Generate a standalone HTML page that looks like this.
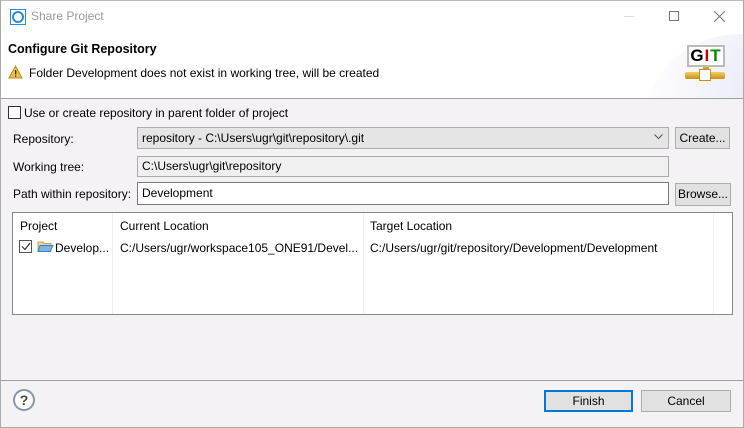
<!DOCTYPE html>
<html><head><style>
*{box-sizing:border-box;margin:0;padding:0}
body{width:744px;height:428px;overflow:hidden;font-family:"Liberation Sans",sans-serif;font-size:12px;color:#000;background:#f5f2f5;position:relative}
.a{position:absolute}
.win{left:0;top:0;width:744px;height:428px;border:1px solid #aaa;border-top:1px solid #bbb}
.btn{position:absolute;background:#e1e1e1;border:1px solid #adadad;text-align:center;line-height:20px}
.fld{position:absolute;border:1px solid #7a7a7a;background:#fff;padding-left:6px;line-height:19px}
</style></head><body>
<div class="a" style="left:0;top:0;width:744px;height:34px;background:#fff"></div>
<div class="a" style="left:0;top:34px;width:744px;height:64px;background:#fff;overflow:hidden">
 <div class="a" style="left:640px;top:0;width:200px;height:200px;border-radius:50%;background:radial-gradient(circle at 70% 30%,#e6e6f6,#fff 70%)"></div>
</div>
<div class="a" style="left:0;top:98px;width:744px;height:1px;background:#a0a0a0"></div>
<!-- title -->
<svg class="a" style="left:10px;top:9px" width="16" height="16"><rect x="0.5" y="0.5" width="15" height="15" fill="#fff" stroke="#2a8ad4"/><circle cx="8" cy="8" r="5" fill="none" stroke="#2a8ad4" stroke-width="2"/></svg>
<div class="a" style="left:31px;top:9px;color:#999;font-size:12px">Share Project</div>
<div class="a" style="left:624px;top:16px;width:10px;height:1px;background:#ddd"></div>
<div class="a" style="left:669px;top:11px;width:10px;height:10px;border:1px solid #777"></div>
<svg class="a" style="left:714px;top:11px" width="11" height="11"><path d="M0 0L11 11M11 0L0 11" stroke="#777"/></svg>
<!-- header -->
<div class="a" style="left:8px;top:42px;font-weight:bold;font-size:12.5px">Configure Git Repository</div>
<svg class="a" style="left:8px;top:65px" width="15" height="14"><path d="M7.5 1L14 13H1Z" fill="#f3c040" stroke="#b88a20"/><rect x="7" y="5" width="1.3" height="4.5" fill="#333"/><rect x="7" y="10.5" width="1.3" height="1.3" fill="#333"/></svg>
<div class="a" style="left:29px;top:66px">Folder Development does not exist in working tree, will be created</div>
<div class="a" style="left:687px;top:45px;width:38px;height:22px;border:2px solid #bbb;background:#fff;font-weight:bold;font-size:17px;line-height:18px;text-align:center;letter-spacing:1px"><span>G</span><span style="color:#c00">I</span><span style="color:#080">T</span></div>
<div class="a" style="left:703px;top:67px;width:6px;height:4px;background:#d9a520"></div>
<div class="a" style="left:685px;top:72px;width:40px;height:7px;background:linear-gradient(#f5d060,#c8901a);border-radius:2px"></div>
<div class="a" style="left:699px;top:69px;width:12px;height:12px;background:#fff;border:1px solid #c8901a"></div>
<!-- content -->
<div class="a" style="left:8px;top:106px;width:13px;height:13px;border:1px solid #333;background:#fff"></div>
<div class="a" style="left:24px;top:106px">Use or create repository in parent folder of project</div>
<div class="a" style="left:13px;top:132px">Repository:</div>
<div class="fld" style="left:137px;top:127px;width:532px;height:22px;background:#e5e5e5;border-color:#adadad;line-height:20px;padding-left:4px">repository - C:\Users\ugr\git\repository\.git</div>
<svg class="a" style="left:654px;top:134px" width="9" height="6"><path d="M0.5 0.5L4.5 4.5L8.5 0.5" fill="none" stroke="#555"/></svg>
<div class="btn" style="left:675px;top:127px;width:55px;height:22px">Create...</div>
<div class="a" style="left:13px;top:160px">Working tree:</div>
<div class="fld" style="left:137px;top:156px;width:532px;height:21px;background:#f0f0f0;border-color:#aaa;padding-left:4px">C:\Users\ugr\git\repository</div>
<div class="a" style="left:13px;top:187px">Path within repository:</div>
<div class="fld" style="left:137px;top:182px;width:532px;height:23px;padding-left:4px;line-height:21px">Development</div>
<div class="btn" style="left:675px;top:183px;width:56px;height:23px">Browse...</div>
<!-- table -->
<div class="a" style="left:12px;top:212px;width:721px;height:103px;border:1px solid #828790;background:#fff"></div>
<div class="a" style="left:112px;top:213px;width:1px;height:101px;background:#eef"></div>
<div class="a" style="left:363px;top:213px;width:1px;height:101px;background:#eef"></div>
<div class="a" style="left:713px;top:213px;width:1px;height:101px;background:#eef"></div>
<div class="a" style="left:20px;top:219px">Project</div>
<div class="a" style="left:120px;top:219px">Current Location</div>
<div class="a" style="left:370px;top:219px">Target Location</div>
<div class="a" style="left:19px;top:240px;width:13px;height:13px;border:1px solid #555;background:#fff"></div>
<svg class="a" style="left:21px;top:242px" width="10" height="9"><path d="M1 4.5L4 7.5L9 1" fill="none" stroke="#333" stroke-width="1.2"/></svg>
<svg class="a" style="left:37px;top:240px" width="17" height="13"><path d="M1 2h5l1 1.5h7v8H1Z" fill="#f3d790" stroke="#c9a24a"/><path d="M3 5.5h13l-3 6H1Z" fill="#7fb6e8" stroke="#3a7fc4"/></svg>
<div class="a" style="left:55px;top:241px">Develop...</div>
<div class="a" style="left:120px;top:241px">C:/Users/ugr/workspace105_ONE91/Devel...</div>
<div class="a" style="left:370px;top:241px">C:/Users/ugr/git/repository/Development/Development</div>
<!-- footer -->
<div class="a" style="left:0;top:380px;width:744px;height:1px;background:#a0a0a0"></div>
<div class="a" style="left:13px;top:389px;width:22px;height:22px;border:2px solid #8a94a8;border-radius:50%;background:#fff;text-align:center;font-weight:bold;font-size:14px;line-height:18px;color:#444">?</div>
<div class="btn" style="left:544px;top:390px;width:89px;height:22px;border:2px solid #0078d7;line-height:18px">Finish</div>
<div class="btn" style="left:641px;top:390px;width:90px;height:22px">Cancel</div>
<div class="a win"></div>
</body></html>
